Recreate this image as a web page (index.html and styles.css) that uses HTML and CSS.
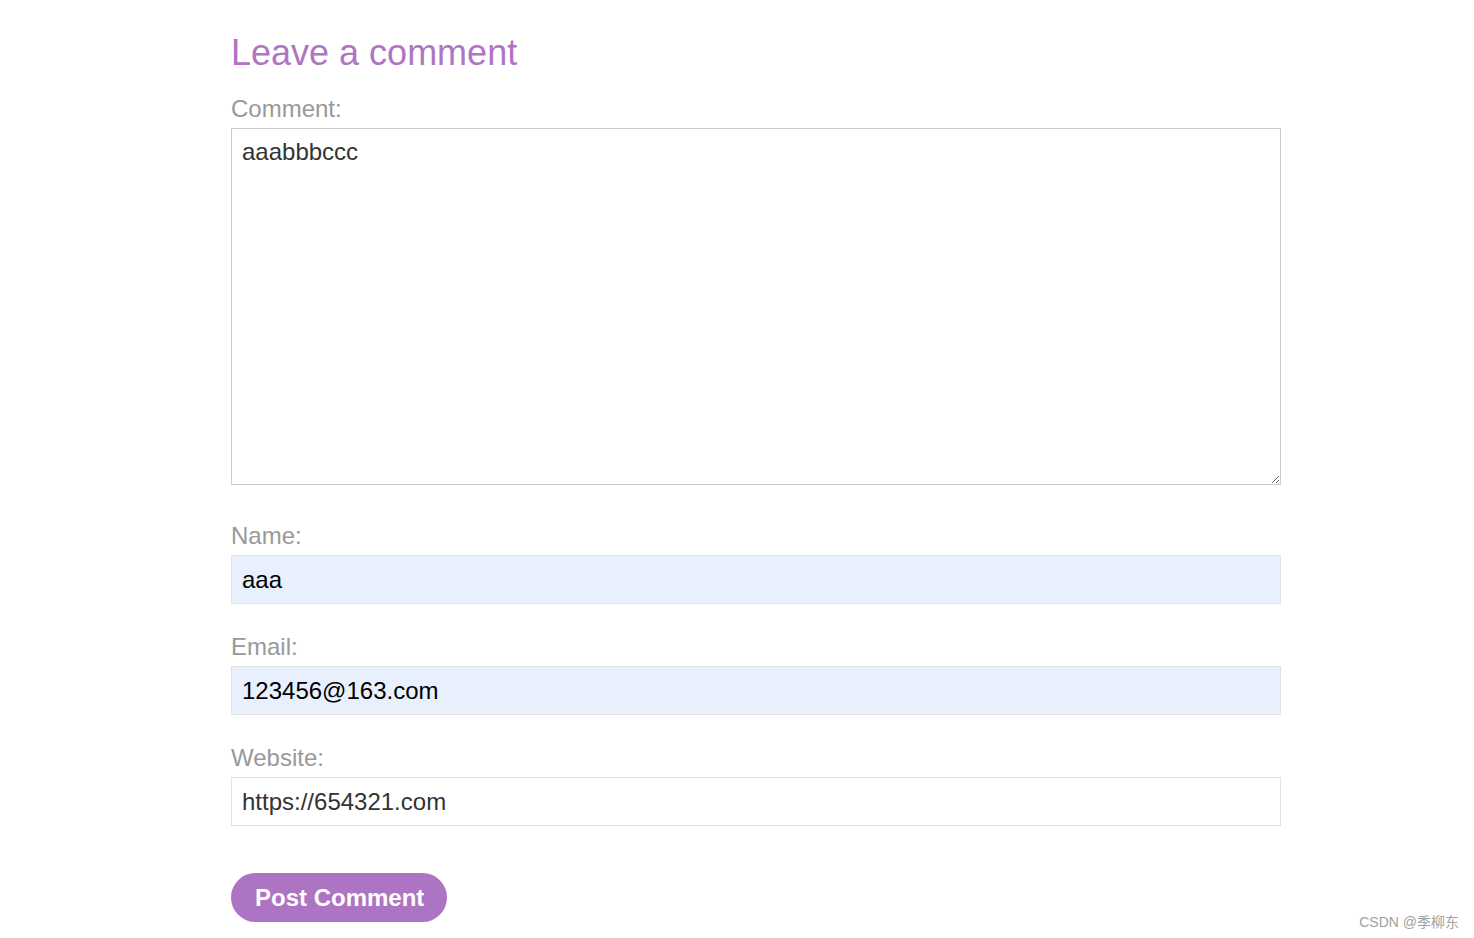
FILE: index.html
```html
<!DOCTYPE html>
<html lang="en">
  <head>
    <meta charset="UTF-8" />
    <meta name="viewport" content="width=device-width, initial-scale=1.0" />
    <title>Leave a comment</title>
    <link rel="stylesheet" href="styles.css">
  </head>
  <body>
    <section class="comment-box">
      <h2>Leave a comment</h2>
      <form class="comment-form">
        <label for="comment">Comment:</label>
        <textarea id="comment" name="comment">aaabbbccc</textarea>

        <label for="name">Name:</label>
        <input id="name" name="name" class="filled" type="text" value="aaa" />

        <label for="email">Email:</label>
        <input id="email" name="email" class="filled" type="text" value="123456@163.com" />

        <label for="website">Website:</label>
        <input id="website" name="website" type="text" value="https://654321.com" />

        <button type="button" class="post-btn">Post Comment</button>
      </form>
    </section>
    <div class="watermark">CSDN @季柳东</div>
  </body>
</html>
```

FILE: styles.css
```css
body {
  margin: 0;
  font-family: "Liberation Sans", Arial, sans-serif;
  background: #fff;
}
.comment-box {
  width: 1050px;
  margin-left: 231px;
  padding-top: 36px;
}
h2 {
  margin: 0 0 26px;
  font-size: 36px;
  font-weight: normal;
  line-height: 33px;
  color: #b074c4;
}
.comment-form {
  display: flex;
  flex-direction: column;
  align-items: flex-start;
}
label {
  font-size: 24px;
  line-height: 27px;
  color: #999;
  margin-bottom: 6px;
}
textarea,
input {
  box-sizing: border-box;
  width: 1050px;
  font-family: "Liberation Sans", Arial, sans-serif;
  font-size: 24px;
  color: #333;
  border: 1px solid #ccc;
  outline: none;
}
textarea {
  height: 357px;
  padding: 8px 10px;
  line-height: 30px;
  margin-bottom: 37px;
  resize: vertical;
}
input {
  height: 49px;
  padding: 0 10px;
  border-color: #e3e3e3;
  margin-bottom: 29px;
}
input.filled {
  background: #e8f0fe;
  color: #000;
}
#website {
  margin-bottom: 47px;
}
.post-btn {
  height: 49px;
  padding: 0 23px 0 24px;
  border: none;
  border-radius: 25px;
  background: #ae74c4;
  color: #fff;
  font-family: "Liberation Sans", Arial, sans-serif;
  font-size: 24px;
  font-weight: bold;
  cursor: pointer;
}
.watermark {
  position: absolute;
  right: 15px;
  top: 911px;
  font-family: "Liberation Sans", "Noto Sans CJK SC", sans-serif;
  font-size: 14px;
  color: #a0a0a0;
}
```
